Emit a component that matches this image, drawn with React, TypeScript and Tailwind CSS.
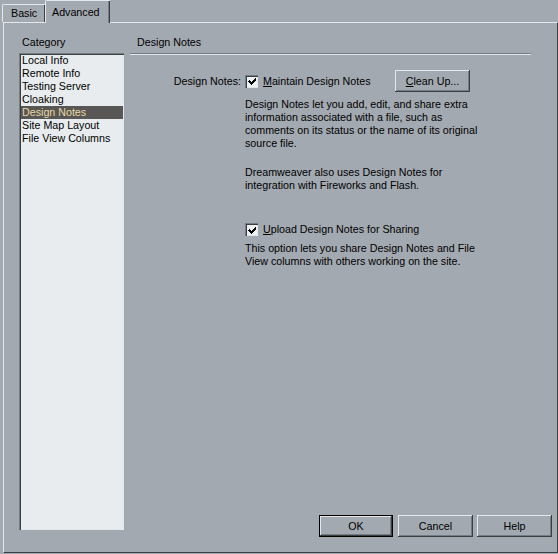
import React from 'react';

const categories = [
  'Local Info',
  'Remote Info',
  'Testing Server',
  'Cloaking',
  'Design Notes',
  'Site Map Layout',
  'File View Columns',
];

const raised =
  'shadow-[inset_-1px_-1px_0_#3c3f42,inset_1px_1px_0_#e4e8ec,inset_-2px_-2px_0_#767c83]';

const Checkbox = () => (
  <span className="flex h-[13px] w-[13px] shrink-0 items-center justify-center bg-[#eef1f3] shadow-[inset_1px_1px_0_#767c83,inset_2px_2px_0_#3c3f42,inset_-1px_-1px_0_#e4e8ec]">
    <svg width="9" height="9" viewBox="0 0 9 9" shapeRendering="crispEdges" className="mt-px ml-px">
      <path d="M1 3h1v1h1v1h1v-1h1v-1h1v-1h1v-1h1v3h-1v1h-1v1h-1v1h-1v1h-1v-1h-1v-1h-1v-1h-1z" fill="#000" />
    </svg>
  </span>
);

const Button = ({ children, primary }: { children: React.ReactNode; primary?: boolean }) => (
  <button
    className={
      primary
        ? 'mr-px h-[22px] w-[74px] border border-black bg-[#a3a9b0] ' + raised
        : 'h-[22px] w-[75px] bg-[#a3a9b0] ' + raised
    }
  >
    {children}
  </button>
);

export default function App() {
  return (
    <div className="h-[554px] w-[558px] overflow-hidden bg-[#a3a9b0] font-['Liberation_Sans',Arial,sans-serif] text-[10.7px] leading-[13px] text-black">
      {/* tab strip */}
      <div className="flex h-[22px] items-end pl-[2px]">
        <div className="flex h-[18px] w-[43px] items-center rounded-tl-[2px] border-t border-l border-[#e4e8ec] pl-[8px] shadow-[inset_-1px_0_0_#3c3f42]">
          Basic
        </div>
        <div className="relative z-10 -mb-px flex h-[23px] w-[65px] items-start rounded-tl-[2px] border-t border-l border-[#e4e8ec] bg-[#a3a9b0] pt-[5px] pl-[6px] shadow-[inset_-1px_0_0_#3c3f42,inset_-2px_0_0_#767c83]">
          Advanced
        </div>
      </div>

      {/* panel */}
      <div className="ml-[3px] flex h-[530px] w-[554px] border-t border-l border-[#e4e8ec] shadow-[1px_1px_0_#3c3f42]">
        {/* category list */}
        <div className="ml-[15px] flex w-[105px] flex-col pt-[13px]">
          <div className="pl-[3px]">Category</div>
          <div className="mt-[4px] h-[477px] bg-[#e8ecee] pt-[1px] pl-[2px] shadow-[inset_1px_1px_0_#767c83,inset_2px_2px_0_#3c3f42,inset_-1px_-1px_0_#e4e8ec]">
            {categories.map((c) => (
              <div
                key={c}
                className={
                  c === 'Design Notes'
                    ? 'mr-[1px] bg-[#595656] pl-[1px] text-[#e8d9a2]'
                    : 'pl-[1px]'
                }
              >
                {c}
              </div>
            ))}
          </div>
        </div>

        {/* settings */}
        <div className="ml-[6px] flex flex-1 flex-col pt-[13px]">
          <div className="pl-[7px]">Design Notes</div>
          <div className="mt-[4px] h-[2px] w-[401px] border-t border-b border-t-[#767c83] border-b-[#e4e8ec]" />

          <div className="mt-[15px] flex h-[22px] w-[340px] items-center">
            <span className="w-[111px] text-right">Design Notes:</span>
            <span className="ml-[4px]">
              <Checkbox />
            </span>
            <span className="ml-[5px]">
              <u>M</u>aintain Design Notes
            </span>
            <span className="ml-auto">
              <Button>
                <u>C</u>lean Up...
              </Button>
            </span>
          </div>

          <div className="mt-[6px] ml-[115px]">
            <p>
              Design Notes let you add, edit, and share extra
              <br />
              information associated with a file, such as
              <br />
              comments on its status or the name of its original
              <br />
              source file.
            </p>
            <p className="mt-[16px]">
              Dreamweaver also uses Design Notes for
              <br />
              integration with Fireworks and Flash.
            </p>

            <div className="mt-[31px] flex h-[13px] items-center">
              <Checkbox />
              <span className="ml-[5px]">
                <u>U</u>pload Design Notes for Sharing
              </span>
            </div>

            <p className="mt-[6px]">
              This option lets you share Design Notes and File
              <br />
              View columns with others working on the site.
            </p>
          </div>

          <div className="mt-auto mb-[15px] flex justify-end gap-[4px] pr-[5px]">
            <Button primary>OK</Button>
            <Button>Cancel</Button>
            <Button>Help</Button>
          </div>
        </div>
      </div>
    </div>
  );
}
